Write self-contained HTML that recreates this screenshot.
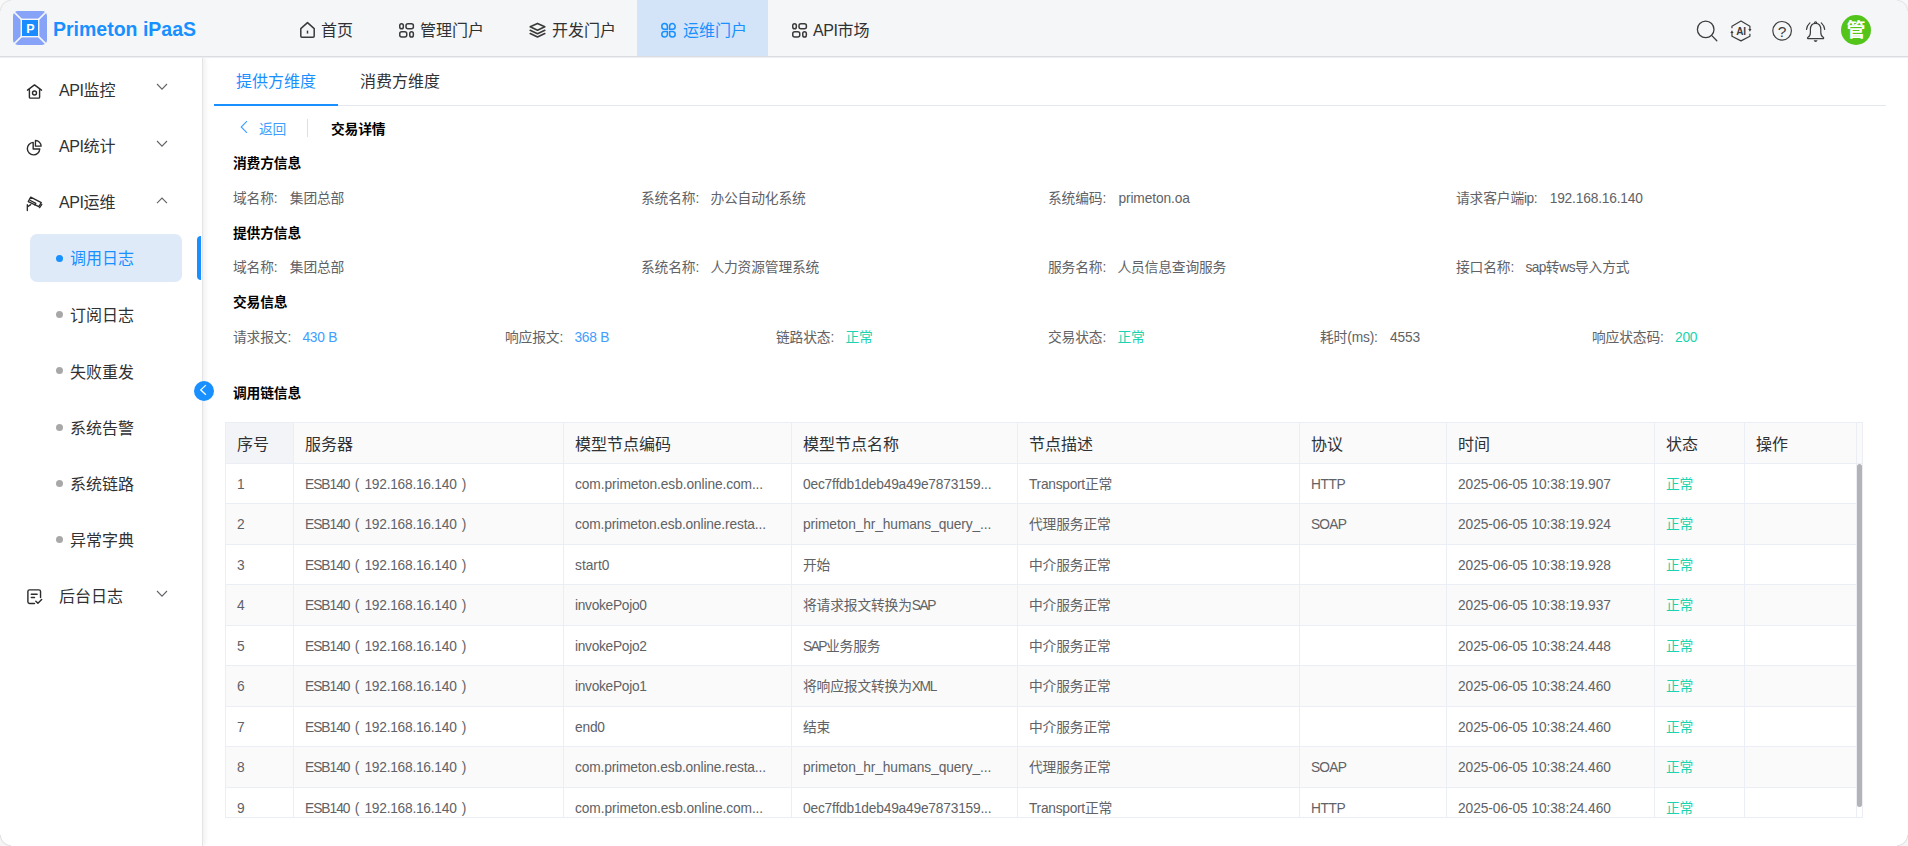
<!DOCTYPE html>
<html lang="zh-CN">
<head>
<meta charset="utf-8">
<title>Primeton iPaaS</title>
<style>
*{box-sizing:border-box;margin:0;padding:0}
html,body{width:1908px;height:846px;overflow:hidden;background:#fff}
body{font-family:"Liberation Sans","Noto Sans CJK SC",sans-serif;font-size:14px;color:#606266;position:relative}
.abs{position:absolute}
/* header */
#hd{position:absolute;left:0;top:0;width:1908px;height:57px;background:#f5f6f8;border-bottom:1px solid #dcdcdc;box-shadow:0 1px 0 #eceef8;z-index:5}
#logo{position:absolute;left:13px;top:11px;width:34px;height:34px}
#brand{position:absolute;left:53px;top:0;height:58px;line-height:59px;font-size:19.5px;font-weight:bold;color:#1890ff;white-space:nowrap}
.nav{position:absolute;top:0;height:56px;line-height:62px;font-size:16px;color:#303133;white-space:nowrap}
.nav svg{position:absolute;top:22px;width:16px;height:16px}
.nav.on{background:#d3e4f8;color:#1890ff}
.nav span{position:absolute;top:0}
.hi{position:absolute}
/* sidebar */
#sb{position:absolute;left:0;top:57px;width:203px;height:789px;background:#fff;border-right:1px solid #e4e4e4;box-shadow:2px 0 5px rgba(0,0,0,.07);z-index:3}
.m1{position:absolute;left:59px;font-size:16px;color:#303133;height:24px;line-height:24px;white-space:nowrap}
.m2{position:absolute;left:70px;font-size:16px;color:#303133;height:24px;line-height:24px;white-space:nowrap}
.dot{position:absolute;left:56px;width:7px;height:7px;border-radius:50%;background:#a8a8a8}
.ic{position:absolute;left:25.5px;width:17px;height:17px}
.ar{position:absolute;left:156px;width:12px;height:7.2px}
.m1 i{font-style:normal;letter-spacing:-0.4px}
/* main */
#main{position:absolute;left:204px;top:57px;width:1704px;height:789px;background:#fff}
.tab{position:absolute;top:58px;height:48px;line-height:48px;font-size:16px;color:#303133;white-space:nowrap}
.sec{position:absolute;left:233px;font-size:13.75px;letter-spacing:-0.15px;font-weight:bold;color:#000;height:20px;line-height:20px;white-space:nowrap}
.f{position:absolute;height:20px;line-height:20px;font-size:13.75px;letter-spacing:-0.15px;color:#606266;white-space:nowrap}
.f b{font-weight:normal;margin-left:11.3px}
i{font-style:normal}
.l{letter-spacing:-0.2px}
.f .bl{color:#409eff}
.f .gr{color:#19d4ae}
/* table */
#tb{position:absolute;left:225px;top:422px;width:1638px;height:396px;border:1px solid #ebeef5;overflow:hidden;background:#fff}
.tr{position:absolute;left:0;width:1631px;height:40px;line-height:40px;border-bottom:1px solid #ebeef5;background:#fff}
.tr.s{background:#fafafa}
.tr.h{background:#fafafa;height:41px;top:0}
.td{position:absolute;top:0;height:100%;border-right:1px solid #ebeef5;padding-left:11px;line-height:inherit;font-size:13.75px;letter-spacing:-0.15px;color:#606266;white-space:nowrap;overflow:hidden}
.h .td{font-size:16px;letter-spacing:0;color:#303133;line-height:43px}
.td.g{color:#19d4ae}
</style>
</head>
<body>
<div id="hd">
<svg id="logo" viewBox="0 0 34 34"><rect x="0" y="0" width="34" height="34" rx="5" fill="#87a3f7"/><path d="M0.5,0.5 L33.5,33.5 M33.5,0.5 L0.5,33.5" stroke="#f5f6f8" stroke-width="1.6"/><rect x="7.6" y="7.6" width="18.8" height="18.8" fill="#f5f6f8"/><rect x="9" y="9" width="16" height="16" fill="#1a8cff"/><text x="17.3" y="21.8" text-anchor="middle" font-family="Liberation Sans, sans-serif" font-weight="bold" font-size="12.5" fill="#fff">P</text></svg>
<div id="brand">Primeton iPaaS</div>
<div class="nav on" style="left:637px;width:131px"></div>
<svg class="hi" style="left:299px;top:21px" width="17" height="18" viewBox="0 0 17 18"><path d="M1.8,7.6 L8.5,1.6 L15.2,7.6 V15.1 Q15.2,16.2 14.1,16.2 H2.9 Q1.8,16.2 1.8,15.1 Z" fill="none" stroke="#3a3a3a" stroke-width="1.5" stroke-linejoin="round"/><path d="M8.5,9.6 V12.6" stroke="#3a3a3a" stroke-width="1.5"/></svg>
<div class="nav" style="left:321px">首页</div>
<svg class="hi" style="left:398px;top:22px" width="17" height="17" viewBox="0 0 17 17"><g fill="none" stroke="#3a3a3a" stroke-width="1.5"><rect x="1.75" y="1.75" width="3.6" height="5" rx="1.8"/><rect x="8" y="1.75" width="7.4" height="5" rx="2"/><rect x="1.75" y="9.75" width="7" height="5.2" rx="2"/><rect x="11.75" y="9.75" width="3.6" height="5.2" rx="1.8"/></g></svg>
<div class="nav" style="left:420px">管理门户</div>
<svg class="hi" style="left:528px;top:21px" width="19" height="18" viewBox="0 0 19 18"><g fill="none" stroke="#3a3a3a" stroke-width="1.6" stroke-linejoin="round" stroke-linecap="round"><path d="M9.5,2.4 L16.8,5.8 L9.5,9.2 L2.2,5.8 Z"/><path d="M2.2,9.3 L9.5,12.7 L16.8,9.3"/><path d="M2.2,12.6 L9.5,16 L16.8,12.6"/></g></svg>
<div class="nav" style="left:552px">开发门户</div>
<svg class="hi" style="left:660px;top:22px" width="17" height="17" viewBox="0 0 17 17"><g fill="none" stroke="#1890ff" stroke-width="1.5" stroke-linejoin="round"><path d="M7.4,7.2 H4.6 A2.8,2.8 0 1 1 7.4,4.4 Z"/><path d="M9.6,7.2 V4.4 A2.8,2.8 0 1 1 12.4,7.2 Z"/><path d="M7.4,9.4 V12.2 A2.8,2.8 0 1 1 4.6,9.4 Z"/><path d="M9.6,9.4 H12.4 A2.8,2.8 0 1 1 9.6,12.2 Z"/></g></svg>
<div class="nav" style="left:683px;color:#1890ff">运维门户</div>
<svg class="hi" style="left:791px;top:22px" width="17" height="17" viewBox="0 0 17 17"><g fill="none" stroke="#3a3a3a" stroke-width="1.5"><rect x="1.75" y="1.75" width="3.6" height="5" rx="1.8"/><rect x="8" y="1.75" width="7.4" height="5" rx="2"/><rect x="1.75" y="9.75" width="7" height="5.2" rx="2"/><rect x="11.75" y="9.75" width="3.6" height="5.2" rx="1.8"/></g></svg>
<div class="nav" style="left:813px"><i style="font-style:normal;letter-spacing:-0.4px">API</i>市场</div>
<svg class="hi" style="left:1694px;top:18px" width="26" height="26" viewBox="0 0 26 26"><g fill="none" stroke="#3d3d3d" stroke-width="1.3" stroke-linecap="round"><circle cx="11.7" cy="11.4" r="8.3"/><path d="M17.6,17.4 L22.8,22.7"/></g></svg>
<svg class="hi" style="left:1729px;top:19px" width="24" height="24" viewBox="0 0 24 24"><g fill="none" stroke="#3d3d3d" stroke-width="1.2" stroke-linejoin="round"><path d="M20.9,10.2 V7.15 L12,2.1 L2.95,7.15 V9.2 M2.95,13.8 V17.2 L12,21.9 L20.9,17.2 V14.8"/></g><path d="M19.3,9.9 L22.5,9.9 L20.9,12.8 Z M1.35,14.1 L4.55,14.1 L2.95,11.2 Z" fill="#3d3d3d"/><text x="12" y="15.7" text-anchor="middle" font-family="Liberation Sans, sans-serif" font-weight="bold" font-size="10" letter-spacing="-0.3" fill="#3d3d3d">AI</text></svg>
<svg class="hi" style="left:1770px;top:19px" width="24" height="24" viewBox="0 0 24 24"><circle cx="12.1" cy="11.8" r="9.3" fill="none" stroke="#3d3d3d" stroke-width="1.2"/><text x="12.1" y="17.5" text-anchor="middle" font-family="Liberation Sans, sans-serif" font-size="15.5" fill="#3d3d3d">?</text></svg>
<svg class="hi" style="left:1803px;top:19px" width="26" height="26" viewBox="0 0 26 26"><g fill="none" stroke="#3d3d3d" stroke-width="1.2" stroke-linecap="round" stroke-linejoin="round"><path d="M12.6,4.3 C8.6,4.3 7.4,7.4 7.4,10.6 V13.4 C7.4,16 6.4,17.4 5,18.2 Q4.2,18.8 4.6,19.4 Q4.8,19.7 5.4,19.7 H19.8 Q20.4,19.7 20.6,19.4 Q21,18.8 20.2,18.2 C18.8,17.4 17.8,16 17.8,13.4 V10.6 C17.8,7.4 16.6,4.3 12.6,4.3 Z"/><path d="M11.6,4.2 A1.05,1.05 0 1 1 13.6,4.2"/><path d="M6.9,3.9 Q4,6.6 3.5,10.3"/><path d="M18.3,3.9 Q21.2,6.6 21.7,10.3"/></g><path d="M10.6,21.2 H14.6 Q14,23 12.6,23 Q11.2,23 10.6,21.2 Z" fill="#3d3d3d"/></svg>
<div class="hi" style="left:1841px;top:15px;width:30px;height:30px;border-radius:50%;background:#52c41a;color:#fff;font-weight:bold;font-size:19px;line-height:31px;text-align:center">管</div>
</div>
<div id="sb">
<svg class="ic" style="top:26px" viewBox="0 0 18 18"><g fill="none" stroke="#2b2b2b" stroke-width="1.5" stroke-linecap="round" stroke-linejoin="round"><path d="M1.6,7.6 L9,2 L16.4,7.6"/><path d="M3.6,7 V15 Q3.6,16 4.6,16 H13.4 Q14.4,16 14.4,15 V7"/><circle cx="9" cy="10.6" r="2.1"/></g></svg>
<div class="m1" style="top:22px"><i>API</i>监控</div>
<svg class="ar" style="top:26px" viewBox="0 0 12 7.2"><path d="M1,1 L6,6.2 L11,1" fill="none" stroke="#606266" stroke-width="1.1"/></svg>
<svg class="ic" style="top:82px" viewBox="0 0 18 18"><g fill="none" stroke="#2b2b2b" stroke-width="1.5" stroke-linejoin="round"><path d="M7.6,3.6 A6.6,6.6 0 1 0 14.6,10.6 H7.6 Z"/><path d="M10,1.6 A6,6 0 0 1 16,7.6 H10 Z" stroke-width="1.4"/></g></svg>
<div class="m1" style="top:78px"><i>API</i>统计</div>
<svg class="ar" style="top:83px" viewBox="0 0 12 7.2"><path d="M1,1 L6,6.2 L11,1" fill="none" stroke="#606266" stroke-width="1.1"/></svg>
<svg class="ic" style="top:138px" viewBox="0 0 18 18"><g fill="none" stroke="#2b2b2b" stroke-width="1.4" stroke-linejoin="round" stroke-linecap="round"><path d="M5,2.2 L16.2,8 L13.6,12.4 L2.4,7 Z"/><path d="M4.6,5.8 L10.4,8.8 L9.4,10.4"/><path d="M1.4,10.2 V16.4 M1.4,12.6 L5,10.2"/><path d="M14.4,13.4 L16.8,10"/></g></svg>
<div class="m1" style="top:134px"><i>API</i>运维</div>
<svg class="ar" style="top:140px" viewBox="0 0 12 7.2"><path d="M1,6.2 L6,1 L11,6.2" fill="none" stroke="#606266" stroke-width="1.1"/></svg>
<div class="abs" style="left:30px;top:177px;width:152px;height:48px;border-radius:7px;background:#dfeaf8"></div>
<div class="abs" style="left:197px;top:179px;width:4px;height:44px;border-radius:4px 0 0 4px;background:#1890ff"></div>
<div class="dot" style="top:197.5px;background:#1890ff"></div><div class="m2" style="top:190px;color:#1890ff">调用日志</div>
<div class="dot" style="top:254px"></div><div class="m2" style="top:247px">订阅日志</div>
<div class="dot" style="top:310.3px"></div><div class="m2" style="top:304px">失败重发</div>
<div class="dot" style="top:366.6px"></div><div class="m2" style="top:360px">系统告警</div>
<div class="dot" style="top:422.9px"></div><div class="m2" style="top:416px">系统链路</div>
<div class="dot" style="top:479.2px"></div><div class="m2" style="top:472px">异常字典</div>
<svg class="ic" style="top:531px" viewBox="0 0 18 18"><g fill="none" stroke="#2b2b2b" stroke-width="1.5" stroke-linecap="round" stroke-linejoin="round"><path d="M9,16.4 H3.8 Q2,16.4 2,14.6 V3.8 Q2,2 3.8,2 H13.6 Q15.4,2 15.4,3.8 V10"/><path d="M5.6,6.6 H11.8 M5.6,10 H9"/><path d="M10.4,14 L12.6,16.2 L16.6,12.2"/></g></svg>
<div class="m1" style="top:528px">后台日志</div>
<svg class="ar" style="top:533px" viewBox="0 0 12 7.2"><path d="M1,1 L6,6.2 L11,1" fill="none" stroke="#606266" stroke-width="1.1"/></svg>
</div>
<div id="main"></div>
<div class="abs" style="left:214px;top:105px;width:1672px;height:1px;background:#e4e7ed"></div>
<div class="abs" style="left:214px;top:104px;width:124px;height:2px;background:#1890ff"></div>
<div class="tab" style="left:236px;color:#1890ff">提供方维度</div>
<div class="tab" style="left:360px">消费方维度</div>
<svg class="abs" style="left:239px;top:120px" width="10" height="14" viewBox="0 0 10 14"><path d="M8,1.2 L2.2,7 L8,12.8" fill="none" stroke="#409eff" stroke-width="1.1"/></svg>
<div class="f" style="left:259px;top:120px;color:#409eff">返回</div>
<div class="abs" style="left:307px;top:119px;width:1px;height:18px;background:#dcdfe6"></div>
<div class="sec" style="left:331px;top:120px">交易详情</div>
<div class="sec" style="top:154px">消费方信息</div>
<div class="f" style="left:233px;top:189px">域名称:<i style="margin-left:1px"></i><b>集团总部</b></div>
<div class="f" style="left:641px;top:189px">系统名称:<b>办公自动化系统</b></div>
<div class="f" style="left:1048px;top:189px">系统编码:<i style="margin-left:1px"></i><b><i style="letter-spacing:-0.1px">primeton.oa</i></b></div>
<div class="f" style="left:1456px;top:189px">请求客户端<i style="letter-spacing:-0.5px">ip</i>:<i style="margin-left:1px"></i><b><i style="letter-spacing:-0.18px">192.168.16.140</i></b></div>
<div class="sec" style="top:224px">提供方信息</div>
<div class="f" style="left:233px;top:258px">域名称:<i style="margin-left:1px"></i><b>集团总部</b></div>
<div class="f" style="left:641px;top:258px">系统名称:<b>人力资源管理系统</b></div>
<div class="f" style="left:1048px;top:258px">服务名称:<b>人员信息查询服务</b></div>
<div class="f" style="left:1456px;top:258px">接口名称:<b><i style="letter-spacing:-0.6px">sap</i>转<i style="letter-spacing:-0.6px">ws</i>导入方式</b></div>
<div class="sec" style="top:293px">交易信息</div>
<div class="f" style="left:233px;top:328px">请求报文:<b class="bl"><i style="letter-spacing:-0.2px">430 B</i></b></div>
<div class="f" style="left:505px;top:328px">响应报文:<b class="bl"><i style="letter-spacing:-0.2px">368 B</i></b></div>
<div class="f" style="left:776px;top:328px">链路状态:<b class="gr">正常</b></div>
<div class="f" style="left:1048px;top:328px">交易状态:<b class="gr">正常</b></div>
<div class="f" style="left:1320px;top:328px">耗时(ms):<i style="margin-left:1px"></i><b><i style="letter-spacing:-0.2px">4553</i></b></div>
<div class="f" style="left:1592px;top:328px">响应状态码:<b class="gr"><i style="letter-spacing:-0.2px">200</i></b></div>
<div class="sec" style="top:384px">调用链信息</div>
<div class="abs" style="left:194px;top:381px;width:20px;height:20px;border-radius:50%;background:#1890ff;z-index:6"><svg width="20" height="20" viewBox="0 0 20 20"><path d="M11.9,4.1 L6.8,8.9 L11.9,13.7" fill="none" stroke="#fff" stroke-width="1.3"/></svg></div>
<div id="tb">
<div class="tr h"><div class="td" style="left:0px;width:68px;background:#f3f4f7">序号</div><div class="td" style="left:68px;width:270px">服务器</div><div class="td" style="left:338px;width:228px">模型节点编码</div><div class="td" style="left:566px;width:226px">模型节点名称</div><div class="td" style="left:792px;width:282px">节点描述</div><div class="td" style="left:1074px;width:147px">协议</div><div class="td" style="left:1221px;width:208px">时间</div><div class="td" style="left:1429px;width:90px">状态</div><div class="td" style="left:1519px;width:112px">操作</div></div>
<div class="tr" style="top:41px;height:40px;line-height:41px"><div class="td" style="left:0px;width:68px">1</div><div class="td" style="left:68px;width:270px"><i style="letter-spacing:-1.0px">ESB140</i><i style="word-spacing:1.6px"> ( </i><i style="letter-spacing:-0.25px">192.168.16.140</i><i style="word-spacing:1.6px"> )</i></div><div class="td" style="left:338px;width:228px"><i style="letter-spacing:-0.1px">com.primeton.esb.online.com...</i></div><div class="td" style="left:566px;width:226px"><i style="letter-spacing:-0.2px">0ec7ffdb1deb49a49e7873159...</i></div><div class="td" style="left:792px;width:282px"><i style="letter-spacing:-0.27px">Transport</i>正常</div><div class="td" style="left:1074px;width:147px"><i style="letter-spacing:-0.4px">HTTP</i></div><div class="td" style="left:1221px;width:208px"><i style="letter-spacing:-0.07px">2025-06-05 10:38:19.907</i></div><div class="td g" style="left:1429px;width:90px">正常</div><div class="td" style="left:1519px;width:112px"></div></div>
<div class="tr s" style="top:81px;height:41px;line-height:42px"><div class="td" style="left:0px;width:68px">2</div><div class="td" style="left:68px;width:270px"><i style="letter-spacing:-1.0px">ESB140</i><i style="word-spacing:1.6px"> ( </i><i style="letter-spacing:-0.25px">192.168.16.140</i><i style="word-spacing:1.6px"> )</i></div><div class="td" style="left:338px;width:228px"><i style="letter-spacing:-0.15px">com.primeton.esb.online.resta...</i></div><div class="td" style="left:566px;width:226px"><i style="letter-spacing:-0.1px">primeton_hr_humans_query_...</i></div><div class="td" style="left:792px;width:282px">代理服务正常</div><div class="td" style="left:1074px;width:147px"><i style="letter-spacing:-0.8px">SOAP</i></div><div class="td" style="left:1221px;width:208px"><i style="letter-spacing:-0.07px">2025-06-05 10:38:19.924</i></div><div class="td g" style="left:1429px;width:90px">正常</div><div class="td" style="left:1519px;width:112px"></div></div>
<div class="tr" style="top:122px;height:40px;line-height:41px"><div class="td" style="left:0px;width:68px">3</div><div class="td" style="left:68px;width:270px"><i style="letter-spacing:-1.0px">ESB140</i><i style="word-spacing:1.6px"> ( </i><i style="letter-spacing:-0.25px">192.168.16.140</i><i style="word-spacing:1.6px"> )</i></div><div class="td" style="left:338px;width:228px"><i style="letter-spacing:0px">start0</i></div><div class="td" style="left:566px;width:226px">开始</div><div class="td" style="left:792px;width:282px">中介服务正常</div><div class="td" style="left:1074px;width:147px"></div><div class="td" style="left:1221px;width:208px"><i style="letter-spacing:-0.07px">2025-06-05 10:38:19.928</i></div><div class="td g" style="left:1429px;width:90px">正常</div><div class="td" style="left:1519px;width:112px"></div></div>
<div class="tr s" style="top:162px;height:41px;line-height:42px"><div class="td" style="left:0px;width:68px">4</div><div class="td" style="left:68px;width:270px"><i style="letter-spacing:-1.0px">ESB140</i><i style="word-spacing:1.6px"> ( </i><i style="letter-spacing:-0.25px">192.168.16.140</i><i style="word-spacing:1.6px"> )</i></div><div class="td" style="left:338px;width:228px"><i style="letter-spacing:-0.3px">invokePojo0</i></div><div class="td" style="left:566px;width:226px">将请求报文转换为<i style="letter-spacing:-1.5px">SAP</i></div><div class="td" style="left:792px;width:282px">中介服务正常</div><div class="td" style="left:1074px;width:147px"></div><div class="td" style="left:1221px;width:208px"><i style="letter-spacing:-0.07px">2025-06-05 10:38:19.937</i></div><div class="td g" style="left:1429px;width:90px">正常</div><div class="td" style="left:1519px;width:112px"></div></div>
<div class="tr" style="top:203px;height:40px;line-height:41px"><div class="td" style="left:0px;width:68px">5</div><div class="td" style="left:68px;width:270px"><i style="letter-spacing:-1.0px">ESB140</i><i style="word-spacing:1.6px"> ( </i><i style="letter-spacing:-0.25px">192.168.16.140</i><i style="word-spacing:1.6px"> )</i></div><div class="td" style="left:338px;width:228px"><i style="letter-spacing:-0.3px">invokePojo2</i></div><div class="td" style="left:566px;width:226px"><i style="letter-spacing:-1.5px">SAP</i>业务服务</div><div class="td" style="left:792px;width:282px">中介服务正常</div><div class="td" style="left:1074px;width:147px"></div><div class="td" style="left:1221px;width:208px"><i style="letter-spacing:-0.07px">2025-06-05 10:38:24.448</i></div><div class="td g" style="left:1429px;width:90px">正常</div><div class="td" style="left:1519px;width:112px"></div></div>
<div class="tr s" style="top:243px;height:41px;line-height:42px"><div class="td" style="left:0px;width:68px">6</div><div class="td" style="left:68px;width:270px"><i style="letter-spacing:-1.0px">ESB140</i><i style="word-spacing:1.6px"> ( </i><i style="letter-spacing:-0.25px">192.168.16.140</i><i style="word-spacing:1.6px"> )</i></div><div class="td" style="left:338px;width:228px"><i style="letter-spacing:-0.3px">invokePojo1</i></div><div class="td" style="left:566px;width:226px">将响应报文转换为<i style="letter-spacing:-1.4px">XML</i></div><div class="td" style="left:792px;width:282px">中介服务正常</div><div class="td" style="left:1074px;width:147px"></div><div class="td" style="left:1221px;width:208px"><i style="letter-spacing:-0.07px">2025-06-05 10:38:24.460</i></div><div class="td g" style="left:1429px;width:90px">正常</div><div class="td" style="left:1519px;width:112px"></div></div>
<div class="tr" style="top:284px;height:40px;line-height:41px"><div class="td" style="left:0px;width:68px">7</div><div class="td" style="left:68px;width:270px"><i style="letter-spacing:-1.0px">ESB140</i><i style="word-spacing:1.6px"> ( </i><i style="letter-spacing:-0.25px">192.168.16.140</i><i style="word-spacing:1.6px"> )</i></div><div class="td" style="left:338px;width:228px"><i style="letter-spacing:-0.2px">end0</i></div><div class="td" style="left:566px;width:226px">结束</div><div class="td" style="left:792px;width:282px">中介服务正常</div><div class="td" style="left:1074px;width:147px"></div><div class="td" style="left:1221px;width:208px"><i style="letter-spacing:-0.07px">2025-06-05 10:38:24.460</i></div><div class="td g" style="left:1429px;width:90px">正常</div><div class="td" style="left:1519px;width:112px"></div></div>
<div class="tr s" style="top:324px;height:41px;line-height:42px"><div class="td" style="left:0px;width:68px">8</div><div class="td" style="left:68px;width:270px"><i style="letter-spacing:-1.0px">ESB140</i><i style="word-spacing:1.6px"> ( </i><i style="letter-spacing:-0.25px">192.168.16.140</i><i style="word-spacing:1.6px"> )</i></div><div class="td" style="left:338px;width:228px"><i style="letter-spacing:-0.15px">com.primeton.esb.online.resta...</i></div><div class="td" style="left:566px;width:226px"><i style="letter-spacing:-0.1px">primeton_hr_humans_query_...</i></div><div class="td" style="left:792px;width:282px">代理服务正常</div><div class="td" style="left:1074px;width:147px"><i style="letter-spacing:-0.8px">SOAP</i></div><div class="td" style="left:1221px;width:208px"><i style="letter-spacing:-0.07px">2025-06-05 10:38:24.460</i></div><div class="td g" style="left:1429px;width:90px">正常</div><div class="td" style="left:1519px;width:112px"></div></div>
<div class="tr" style="top:365px;height:40px;line-height:41px"><div class="td" style="left:0px;width:68px">9</div><div class="td" style="left:68px;width:270px"><i style="letter-spacing:-1.0px">ESB140</i><i style="word-spacing:1.6px"> ( </i><i style="letter-spacing:-0.25px">192.168.16.140</i><i style="word-spacing:1.6px"> )</i></div><div class="td" style="left:338px;width:228px"><i style="letter-spacing:-0.1px">com.primeton.esb.online.com...</i></div><div class="td" style="left:566px;width:226px"><i style="letter-spacing:-0.2px">0ec7ffdb1deb49a49e7873159...</i></div><div class="td" style="left:792px;width:282px"><i style="letter-spacing:-0.27px">Transport</i>正常</div><div class="td" style="left:1074px;width:147px"><i style="letter-spacing:-0.4px">HTTP</i></div><div class="td" style="left:1221px;width:208px"><i style="letter-spacing:-0.07px">2025-06-05 10:38:24.460</i></div><div class="td g" style="left:1429px;width:90px">正常</div><div class="td" style="left:1519px;width:112px"></div></div>
<div class="abs" style="left:1631px;top:0;width:5px;height:41px;background:#fafafa;border-bottom:1px solid #ebeef5"></div>
<div class="abs" style="left:1631px;top:41px;width:5px;height:343px;border-radius:2.5px;background:#b2b2b7"></div>
</div>
<div class="abs" style="left:0;top:0;width:11px;height:11px;z-index:9;background:radial-gradient(circle at 100% 100%,rgba(0,0,0,0) 9.6px,#e4e4e6 10.4px,#f9f9f9 11.6px)"></div>
<div class="abs" style="right:0;top:0;width:11px;height:11px;z-index:9;background:radial-gradient(circle at 0 100%,rgba(0,0,0,0) 9.6px,#e4e4e6 10.4px,#f9f9f9 11.6px)"></div>
<div class="abs" style="left:0;bottom:0;width:11px;height:11px;z-index:9;background:radial-gradient(circle at 100% 0,rgba(0,0,0,0) 9.6px,#e0e0e0 10.4px,#f5f5f5 11.6px)"></div>
<div class="abs" style="right:0;bottom:0;width:11px;height:11px;z-index:9;background:radial-gradient(circle at 0 0,rgba(0,0,0,0) 9.6px,#e0e0e0 10.4px,#f5f5f5 11.6px)"></div>
</body>
</html>
